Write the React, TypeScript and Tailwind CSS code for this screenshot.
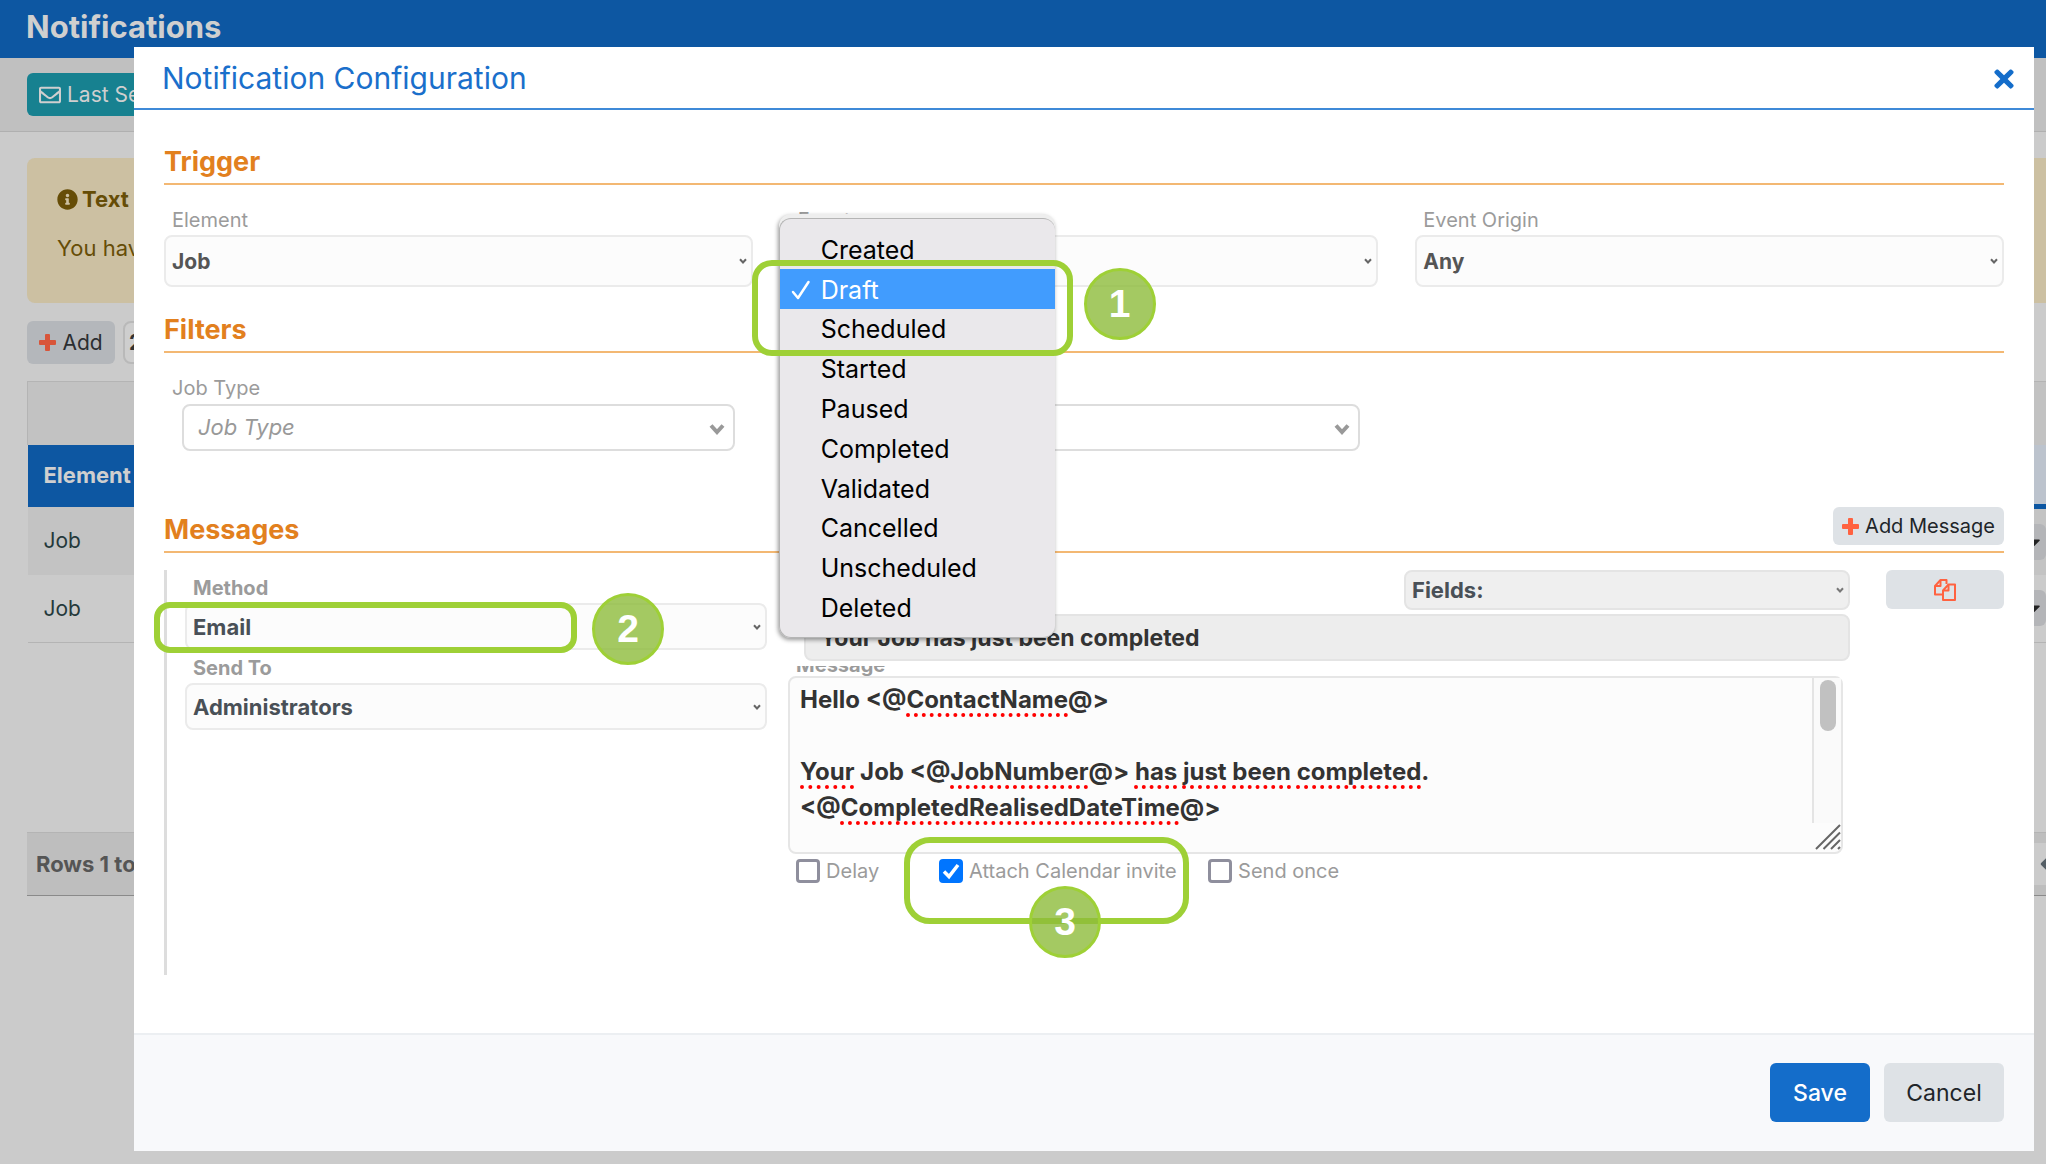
import type { ReactNode } from 'react'
import { FaTimes, FaInfoCircle, FaRegEnvelope, FaChevronLeft, FaCaretDown } from 'react-icons/fa'

const EVENTS = [
  'Created',
  'Draft',
  'Scheduled',
  'Started',
  'Paused',
  'Completed',
  'Validated',
  'Cancelled',
  'Unscheduled',
  'Deleted',
]

function SmallChevron({ className = '' }: { className?: string }) {
  return (
    <svg className={`pointer-events-none absolute top-1/2 -translate-y-1/2 ${className}`} viewBox="0 0 16 12" fill="none" stroke="currentColor" strokeWidth="4" aria-hidden="true">
      <path d="M2 2.5 L8 9 L14 2.5" />
    </svg>
  )
}

function PlusIcon({ className = '' }: { className?: string }) {
  return (
    <svg className={`h-[17px] w-[17px] ${className}`} viewBox="0 0 17 17" fill="currentColor" aria-hidden="true">
      <path d="M7 0 H10 Q11 0 11 1 V6 H16 Q17 6 17 7 V10 Q17 11 16 11 H11 V16 Q11 17 10 17 H7 Q6 17 6 16 V11 H1 Q0 11 0 10 V7 Q0 6 1 6 H6 V1 Q6 0 7 0 Z" />
    </svg>
  )
}

interface FieldProps {
  id: string
  label: string
  value: string
  bold?: boolean
}

function Field({ id, label, value, bold }: FieldProps) {
  return (
    <div>
      <label htmlFor={id} className={`block pt-1 pl-2 text-[20px] leading-[29px] text-[#9b9b9b] ${bold ? 'font-bold' : ''}`}>
        {label}
      </label>
      <div className="relative">
        <select
          id={id}
          className={`block w-full appearance-none rounded-lg border-2 border-[#ebebeb] bg-[#fcfcfc] pt-0.5 pl-1.5 font-bold ${
            bold ? 'h-[47px] text-[22px] text-[#495057]' : 'h-[52px] text-[21px] text-[#555]'
          }`}
        >
          <option>{value}</option>
        </select>
        <SmallChevron className="right-1.5 w-2 text-[#666]" />
      </div>
    </div>
  )
}

function FilterField({ id, label }: { id: string; label: string }) {
  return (
    <div>
      <label htmlFor={id} className="block pt-0.5 pl-2 text-[20px] leading-[31px] text-[#9b9b9b]">
        {label}
      </label>
      <div className="relative mx-[18px]">
        <select id={id} className="block h-[47px] w-full appearance-none rounded-lg border-2 border-[#ddd] bg-white pl-3.5 text-[22px] text-[#999] italic">
          <option>{label}</option>
        </select>
        <SmallChevron className="right-2.5 w-4 pt-0.5 text-[#999]" />
      </div>
    </div>
  )
}

function Section({ title, action, children }: { title: string; action?: ReactNode; children: ReactNode }) {
  return (
    <section>
      <div className="flex h-[43px] items-start justify-between border-b-2 border-[#f3b873]">
        <h2 className="text-[27px] leading-10 font-bold text-[#e2801e]">{title}</h2>
        {action}
      </div>
      {children}
    </section>
  )
}

function Step({ n, className }: { n: number; className: string }) {
  return (
    <div
      className={`absolute flex h-[72px] w-[72px] items-center justify-center rounded-full border-[3px] border-[#9ed036] bg-[#8dbb3b]/80 text-[39px] font-bold text-white ${className}`}
    >
      <span className="[font-family:'Liberation_Sans',Arial,sans-serif]">{n}</span>
    </div>
  )
}

function Typo({ children }: { children: string }) {
  return <span className="underline decoration-[#f00] decoration-dotted decoration-4 underline-offset-[5px]">{children}</span>
}

function Check({ label, checked }: { label: string; checked?: boolean }) {
  return (
    <label className="flex items-center gap-1.5 text-[20px] leading-[26px] text-[#9b9b9b]">
      <span className="relative flex">
        <input
          type="checkbox"
          defaultChecked={checked}
          className="peer h-6 w-6 appearance-none rounded-[4px] border-[3px] border-[#8f8f9d] bg-white checked:border-[#0075ff] checked:bg-[#0075ff]"
        />
        <svg viewBox="0 0 24 24" className="pointer-events-none absolute inset-0 hidden text-white peer-checked:block" fill="none" stroke="currentColor" strokeWidth="3.5">
          <path d="M5 12.5 L10 17.5 L19 6" />
        </svg>
      </span>
      {label}
    </label>
  )
}

function EventMenu() {
  return (
    <div className="absolute top-0 -left-[11px] w-[276px] rounded-xl bg-[#eee] pt-1 shadow-[-1px_2px_4px_rgba(0,0,0,0.4)]">
      <div className="rounded-xl border border-r-0 border-[#b5b5b5] bg-[#eae8eb] pt-2.5 pb-2.5">
        <ul role="listbox" aria-label="Event" className="grid h-[398px] grid-rows-10 text-[25px] text-black">
          {EVENTS.map((event) => (
            <li
              key={event}
              role="option"
              aria-selected={event === 'Draft'}
              className={`flex items-center pt-0.5 pl-[41px] leading-9 ${event === 'Draft' ? 'relative bg-[#419cfe] text-white' : ''}`}
            >
              {event === 'Draft' && (
                <svg viewBox="0 0 20 20" className="absolute left-[11px] h-5 w-5" fill="none" stroke="currentColor" strokeWidth="2.5" strokeLinecap="round" strokeLinejoin="round">
                  <path d="M2 12 L7 18 L17.500 2" />
                </svg>
              )}
              {event}
            </li>
          ))}
        </ul>
      </div>
    </div>
  )
}

function Background() {
  return (
    <div className="min-h-screen bg-[#cbcbcb]">
      <header className="flex h-[58px] items-center bg-[#0d57a2] px-[26px] pb-1">
        <h1 className="text-[31px] font-bold text-[#cfcfcf]">Notifications</h1>
      </header>
      <div className="border-b border-[#b0b0b0] bg-[#c0c0c0] px-[27px] py-[15px]">
        <button className="flex h-[43px] items-center gap-1.5 rounded-md bg-[#178190] px-3 text-[21px] text-[#cfcfcf]">
          <FaRegEnvelope className="h-[22px] w-[22px]" />
          Last Sent
        </button>
      </div>
      <div className="mt-[26px] ml-[27px] h-[145px] rounded-l-lg bg-[#ccc0a2] px-[30px] pt-[25px] text-[22px] text-[#664d07]">
        <p className="flex items-center gap-1 leading-[33px] font-bold">
          <FaInfoCircle className="h-[21px] w-[21px]" />
          Text messages
        </p>
        <p className="mt-4 leading-[33px]">You have text messages available</p>
      </div>
      <div className="mt-[18px] flex gap-2 pl-[27px]">
        <button className="flex h-[43px] w-[88px] items-center justify-center gap-1.5 rounded-md bg-[#b4b7bb] text-[21px] text-[#2b2e31]">
          <PlusIcon className="text-[#d8553a]" />
          Add
        </button>
        <select aria-label="Page size" className="h-[43px] w-24 appearance-none rounded-lg border-2 border-[#b9b9b9] bg-[#cecece] pl-1 text-[21px] font-bold text-[#333]">
          <option>20</option>
        </select>
      </div>
      <div className="mt-[17px] ml-[27px]">
        <table className="w-full border-collapse text-[21px] text-[#25393b]">
          <thead>
            <tr className="h-[63px] border-t border-l border-[#b4b4b4] bg-[#c2c2c2]">
              <td colSpan={2} />
            </tr>
            <tr className="h-[62px] bg-[#0d57a2] text-left text-[22px] text-[#cfcfcf]">
              <th className="pl-4">Element</th>
              <th className="w-12 border-b-[5px] border-[#0d57a2] bg-[#bcc3cd]" />
            </tr>
          </thead>
          <tbody>
            {[0, 1].map((row) => (
              <tr key={row} className="h-[68px] border-b border-[#b4b4b4] odd:border-b-0 odd:bg-[#c3c3c3]">
                <td className="pl-4">Job</td>
                <td className="w-12 p-0">
                  <button aria-label="Row actions" className="flex h-9 w-12 items-center justify-end rounded-r-md bg-[#b4b5b8] pr-0.5 text-[#222]">
                    <FaCaretDown className="h-5 w-5" />
                  </button>
                </td>
              </tr>
            ))}
          </tbody>
        </table>
        <div className="mt-[189px] flex h-16 items-center justify-between border-t border-b border-t-[#b4b4b4] border-b-[#8a8a8a] bg-[#bebebe] pl-[9px] text-[22px] font-bold text-[#555]">
          Rows 1 to 2 of 2
          <button aria-label="Previous page" className="flex h-[42px] w-3 items-center overflow-hidden bg-[#cbcbcb] text-[#555f66]">
            <FaChevronLeft className="h-7 w-7 shrink-0" />
          </button>
        </div>
      </div>
    </div>
  )
}

export default function App() {
  return (
    <div className="relative min-h-screen overflow-hidden [font-family:Inter,sans-serif]">
      <Background />
      <div className="absolute inset-0 pt-[47px] pr-3 pl-[134px]">
        <div role="dialog" aria-label="Notification Configuration" className="bg-white">
          <div className="flex h-[63px] items-center justify-between border-b-2 border-[#3f8ad8] pt-0.5 pr-5 pl-7">
            <h1 className="text-[30px] text-[#1a6fcb]">Notification Configuration</h1>
            <button aria-label="Close" className="text-[#146dca]">
              <FaTimes className="h-7 w-5" />
            </button>
          </div>

          <div className="px-[30px] pt-8">
            <Section title="Trigger">
              <div className="grid grid-cols-3 gap-[37px] pt-[17px]">
                <Field id="element" label="Element" value="Job" />
                <div className="relative">
                  <Field id="event" label="Event" value="Draft" />
                  <div className="absolute top-3 left-0 z-10">
                    <EventMenu />
                    <div className="absolute top-[46px] -left-[38px] h-[96px] w-[321px] rounded-[20px] border-[6px] border-[#9ed036]" />
                    <Step n={1} className="top-[54px] left-[294px]" />
                  </div>
                </div>
                <Field id="origin" label="Event Origin" value="Any" />
              </div>
            </Section>

            <div className="pt-[23px]">
              <Section title="Filters">
                <div className="grid grid-cols-3 gap-[37px] pt-[18px]">
                  <FilterField id="job-type" label="Job Type" />
                  <FilterField id="category" label="Category" />
                </div>
              </Section>
            </div>

            <div className="pt-[59px]">
              <Section
                title="Messages"
                action={
                  <button className="-mt-[3px] flex h-[38px] items-center gap-1.5 rounded-md bg-[#dee2e6] px-[9px] text-[20px] text-[#212529]">
                    <PlusIcon className="text-[#ff6240]" />
                    Add Message
                  </button>
                }
              >
                <div className="mt-[17px] mb-[58px] flex h-[405px] border-l-[3px] border-[#ddd] pl-[18px]">
                  <div className="relative w-[32%]">
                    <Field id="method" label="Method" value="Email" bold />
                    <Field id="send-to" label="Send To" value="Administrators" bold />
                    <div className="absolute top-8 -left-[31px] h-[51px] w-[423px] rounded-2xl border-[6px] border-[#9ed036]" />
                    <Step n={2} className="top-[23px] left-[407px]" />
                  </div>

                  <div className="ml-[21px] flex-1">
                    <div className="ml-4">
                      <div className="relative ml-auto w-[446px]">
                        <select aria-label="Fields" className="block h-10 w-full appearance-none rounded-lg border-2 border-[#e4e4e4] bg-[#efefef] pl-1.5 text-[22px] font-bold text-[#495057]">
                          <option>Fields:</option>
                        </select>
                        <SmallChevron className="right-1.5 w-2 text-[#777]" />
                      </div>
                      <input
                        aria-label="Subject"
                        defaultValue="Your Job has just been completed"
                        className="mt-1 block h-[47px] w-full rounded-lg border-2 border-[#e4e4e4] bg-[#ededed] pl-3.5 text-[23px] font-bold text-[#333]"
                      />
                    </div>
                    <div className="mt-[5px] flex h-[10px] items-end overflow-hidden pb-1">
                      <label htmlFor="message" className="pl-2 text-[20px] leading-[14px] font-bold text-[#9b9b9b]">
                        Message
                      </label>
                    </div>
                    <div className="relative mr-[7px] h-[178px] rounded-lg border-2 border-[#e6e6e6] bg-[#fcfcfc]">
                      <div
                        id="message"
                        role="textbox"
                        aria-multiline="true"
                        className="pt-1 pl-2.5 text-[24px] leading-9 font-bold text-[#333]"
                      >
                        <p>Hello &lt;@<Typo>ContactName</Typo>@&gt;</p>
                        <p className="h-9" />
                        <p>
                          <Typo>Your</Typo> Job &lt;@<Typo>JobNumber</Typo>@&gt; <Typo>has</Typo> <Typo>just</Typo> <Typo>been</Typo> <Typo>completed</Typo>.
                        </p>
                        <p>&lt;@<Typo>CompletedRealisedDateTime</Typo>@&gt;</p>
                      </div>
                      <div className="absolute top-0 right-0 h-[145px] w-[29px] border-l-2 border-[#e4e4e4] bg-[#fafafa]">
                        <div className="mx-auto mt-0.5 h-[51px] w-4 rounded-full bg-[#c1c1c1]" />
                      </div>
                      <svg viewBox="0 0 26 26" className="absolute right-0 bottom-0.5 h-[26px] w-[26px]" stroke="#666" strokeWidth="2">
                        <path d="M1 25 L25 1 M8.500 25 L25 8.500 M16 25 L25 16 M23 25 L25 23" />
                      </svg>
                    </div>
                    <div className="relative mt-1 flex pl-2">
                      <div className="w-[143px]">
                        <Check label="Delay" />
                      </div>
                      <div className="w-[269px]">
                        <Check label="Attach Calendar invite" checked />
                      </div>
                      <Check label="Send once" />
                      <div className="absolute -top-[21px] left-[116px] h-[87px] w-[285px] rounded-[26px] border-[6px] border-[#9ed036]" />
                      <Step n={3} className="top-7 left-[241px]" />
                    </div>
                  </div>

                  <button aria-label="Duplicate message" className="ml-9 flex h-[39px] w-[118px] items-center justify-center rounded-md bg-[#dee2e6] text-[#ff6240]">
                    <svg viewBox="0 0 22 22" className="h-[22px] w-[22px]" fill="none" stroke="currentColor" strokeWidth="2" strokeLinejoin="round">
                      <path d="M9 15.500 H1 V7 L6.500 1 H12.500 V5" />
                      <path d="M6.500 1 V7 H1" />
                      <path d="M9 11.500 L14.500 5.500 H21 V21 H9 Z" />
                      <path d="M14.500 5.500 V11.500 H9" />
                    </svg>
                  </button>
                </div>
              </Section>
            </div>
          </div>

          <div className="flex justify-end gap-3.5 border-t-2 border-[#eceff2] bg-[#f8f9fb] px-[30px] pt-7 pb-[29px]">
            <button className="h-[59px] w-[100px] rounded-md bg-[#146dca] pt-0.5 text-[23px] font-medium text-white">Save</button>
            <button className="h-[59px] w-[120px] rounded-md bg-[#dee2e6] pt-0.5 text-[23px] text-[#212529]">Cancel</button>
          </div>
        </div>
      </div>
    </div>
  )
}
